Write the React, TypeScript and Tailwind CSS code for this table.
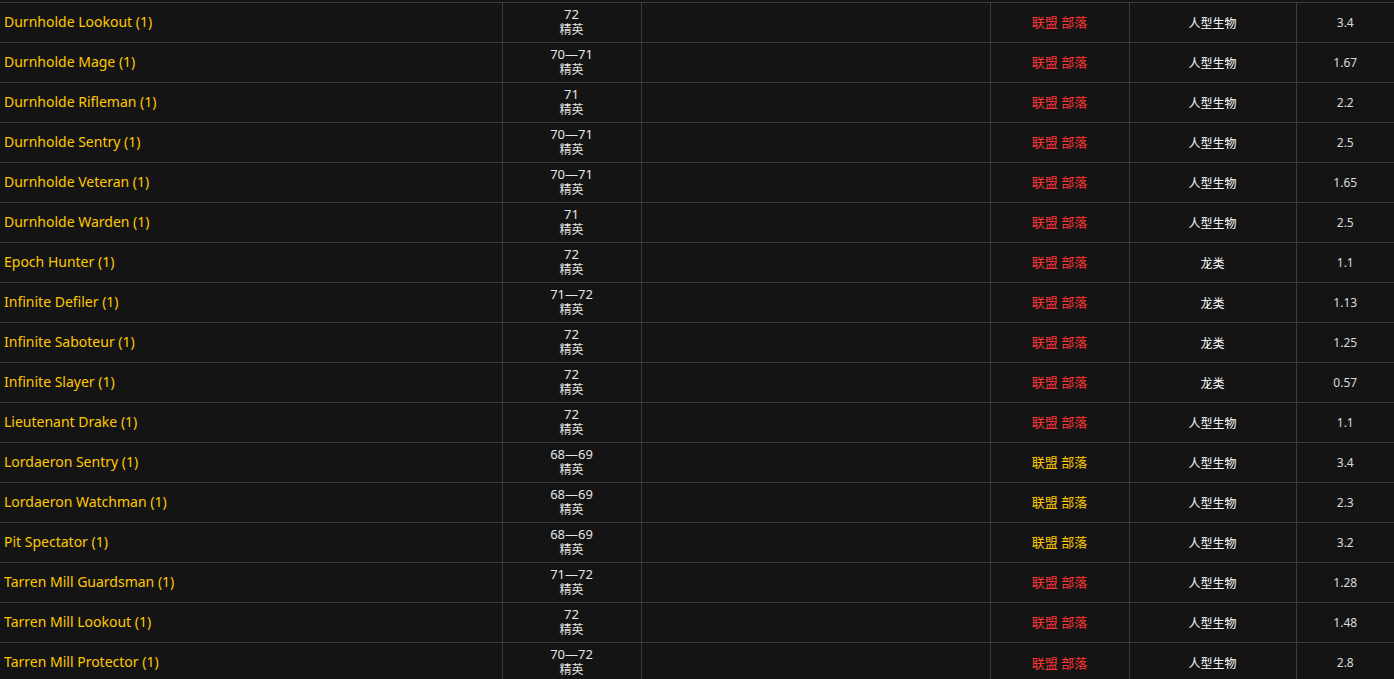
import React from "react";

type Row = {
  name: string;
  level: string;
  faction: "red" | "yellow";
  type: string;
  hp: string;
};

const rows: Row[] = [
  { name: "Durnholde Lookout (1)", level: "72", faction: "red", type: "人型生物", hp: "3.4" },
  { name: "Durnholde Mage (1)", level: "70—71", faction: "red", type: "人型生物", hp: "1.67" },
  { name: "Durnholde Rifleman (1)", level: "71", faction: "red", type: "人型生物", hp: "2.2" },
  { name: "Durnholde Sentry (1)", level: "70—71", faction: "red", type: "人型生物", hp: "2.5" },
  { name: "Durnholde Veteran (1)", level: "70—71", faction: "red", type: "人型生物", hp: "1.65" },
  { name: "Durnholde Warden (1)", level: "71", faction: "red", type: "人型生物", hp: "2.5" },
  { name: "Epoch Hunter (1)", level: "72", faction: "red", type: "龙类", hp: "1.1" },
  { name: "Infinite Defiler (1)", level: "71—72", faction: "red", type: "龙类", hp: "1.13" },
  { name: "Infinite Saboteur (1)", level: "72", faction: "red", type: "龙类", hp: "1.25" },
  { name: "Infinite Slayer (1)", level: "72", faction: "red", type: "龙类", hp: "0.57" },
  { name: "Lieutenant Drake (1)", level: "72", faction: "red", type: "人型生物", hp: "1.1" },
  { name: "Lordaeron Sentry (1)", level: "68—69", faction: "yellow", type: "人型生物", hp: "3.4" },
  { name: "Lordaeron Watchman (1)", level: "68—69", faction: "yellow", type: "人型生物", hp: "2.3" },
  { name: "Pit Spectator (1)", level: "68—69", faction: "yellow", type: "人型生物", hp: "3.2" },
  { name: "Tarren Mill Guardsman (1)", level: "71—72", faction: "red", type: "人型生物", hp: "1.28" },
  { name: "Tarren Mill Lookout (1)", level: "72", faction: "red", type: "人型生物", hp: "1.48" },
  { name: "Tarren Mill Protector (1)", level: "70—72", faction: "red", type: "人型生物", hp: "2.8" },
];

const font = "font-['Noto_Sans','Noto_Sans_CJK_SC',sans-serif]";

const App = () => {
  return (
    <div className={`w-[1394px] h-[679px] overflow-hidden bg-[#141414] pt-[2px] ${font}`}>
      <table className="w-[1400px] border-collapse table-fixed">
        <colgroup>
          <col className="w-[502px]" />
          <col className="w-[139px]" />
          <col className="w-[349px]" />
          <col className="w-[139px]" />
          <col className="w-[167px]" />
          <col className="w-[104px]" />
        </colgroup>
        <tbody>
          {rows.map((r) => (
            <tr key={r.name} className="h-[40px] border-t border-[#3c3c3c]">
              <td className="px-1 pb-[2px] text-[14px] text-[#ffc800] align-middle">{r.name}</td>
              <td className="border-l border-[#3c3c3c] pb-[2px] text-center leading-[16px] text-[#e6e6e6]">
                <div className="text-[13px]">{r.level}</div>
                <div className="text-[12px]">精英</div>
              </td>
              <td className="border-l border-[#3c3c3c]"></td>
              <td
                className={`border-l border-[#3c3c3c] pt-[1px] text-center text-[13px] ${
                  r.faction === "red" ? "text-[#ff3535]" : "text-[#ffc800]"
                }`}
              >
                联盟 部落
              </td>
              <td className="border-l border-[#3c3c3c] pt-[2px] text-center text-[12px] text-white">{r.type}</td>
              <td className="border-l border-[#3c3c3c] pr-[6px] text-center text-[12px] text-[#dcdcdc]">
                {r.hp}
              </td>
            </tr>
          ))}
        </tbody>
      </table>
    </div>
  );
};

export default App;
